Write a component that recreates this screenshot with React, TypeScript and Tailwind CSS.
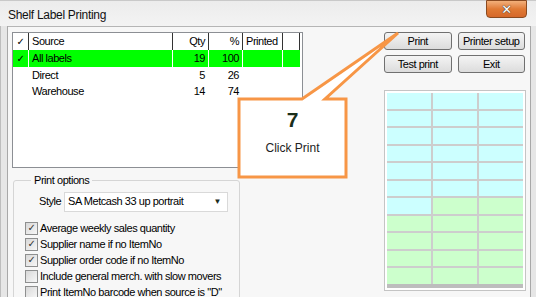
import React from "react";

const rows = [
  { name: "All labels", qty: 19, pct: 100, sel: true },
  { name: "Direct", qty: 5, pct: 26, sel: false },
  { name: "Warehouse", qty: 14, pct: 74, sel: false },
];

const options = [
  { text: "Average weekly sales quantity", on: true },
  { text: "Supplier name if no ItemNo", on: true },
  { text: "Supplier order code if no ItemNo", on: true },
  { text: "Include general merch. with slow movers", on: false },
  { text: 'Print ItemNo barcode when source is "D"', on: false },
];

function CheckBox({ on }: { on: boolean }) {
  return (
    <div className="w-[13px] h-[13px] border border-[#8e8f8f] bg-gradient-to-br from-[#d8d8d8] to-[#f7f7f7] flex items-center justify-center text-[10px] leading-none text-[#333]">
      {on ? "✓" : ""}
    </div>
  );
}

function Btn({ label }: { label: string }) {
  return (
    <div className="h-[18px] rounded-[3px] border border-[#707070] bg-gradient-to-b from-[#f4f4f4] to-[#dcdcdc] flex items-center justify-center text-[11px] text-black">
      {label}
    </div>
  );
}

export default function App() {
  const cells = Array.from({ length: 33 }, (_, i) => i);
  return (
    <div
      className="relative w-[536px] h-[297px] overflow-hidden bg-[#efefef] text-[11px] tracking-[-0.45px] text-black"
      style={{ fontFamily: '"Liberation Sans", "DejaVu Sans", sans-serif' }}
    >
      {/* title bar */}
      <div className="h-[26px] flex border-t border-[#c9c9c9] bg-gradient-to-b from-[#ececec] to-[#f3f3f3]">
        <div className="pl-[8px] pt-[5px] text-[12px] tracking-[-0.3px] text-[#111]">Shelf Label Printing</div>
        <div className="ml-auto mr-[9px] -mt-[1px] w-[41px] h-[18px] rounded-b-[4px] border border-[#8a4a20] bg-gradient-to-b from-[#f2b07a] via-[#e07a34] to-[#d5682a] flex items-center justify-center">
          <span className="text-white font-bold text-[13px] leading-none" style={{ textShadow: "0 0 1px #333, 0 0 1px #333" }}>
            ✕
          </span>
        </div>
      </div>

      {/* body */}
      <div className="flex h-[271px]">
        <div className="w-[8px] border-l border-[#bdbdbd] border-r border-r-[#a8a8a8] bg-[#e6e6e6]" />
        <div className="w-[522px] bg-[#f7f7f7] border-t border-[#b5b5b5] flex pl-[4px] pt-[5px]">
          {/* left column */}
          <div className="w-[291px] flex flex-col">
            <div className="shrink-0 h-[136px] border border-[#8c8f94] bg-white">
              <div className="flex h-[17px] items-center">
                <div className="w-[16px] h-full flex items-center justify-center border-r border-[#333] text-[10px]">✓</div>
                <div className="w-[144px] h-full flex items-center pl-[3px] border-r border-[#333]">Source</div>
                <div className="w-[36px] h-full flex items-center justify-end pr-[3px] border-r border-[#333]">Qty</div>
                <div className="w-[34px] h-full flex items-center justify-end pr-[3px] border-r border-[#333]">%</div>
                <div className="w-[40px] h-full flex items-center pl-[3px] border-r border-[#333]">Printed</div>
                <div className="w-[17px] h-full border-r border-[#333]" />
              </div>
              {rows.map((r) => (
                <div key={r.name} className="flex h-[16.5px] items-center">
                  <div className={`w-[16px] h-full flex items-center justify-center border-r border-white text-[10px] ${r.sel ? "bg-[#00ff00]" : ""}`}>
                    {r.sel ? "✓" : ""}
                  </div>
                  <div className={`w-[144px] h-full flex items-center pl-[3px] border-r border-white ${r.sel ? "bg-[#00ff00]" : ""}`}>{r.name}</div>
                  <div className={`w-[36px] h-full flex items-center justify-end pr-[3px] border-r border-white ${r.sel ? "bg-[#00ff00]" : ""}`}>{r.qty}</div>
                  <div className={`w-[34px] h-full flex items-center justify-end pr-[3px] border-r border-white ${r.sel ? "bg-[#00ff00]" : ""}`}>{r.pct}</div>
                  <div className={`w-[40px] h-full border-r border-white ${r.sel ? "bg-[#00ff00]" : ""}`} />
                  <div className={`w-[17px] h-full ${r.sel ? "bg-[#00ff00]" : ""}`} />
                </div>
              ))}
            </div>

            <fieldset className="shrink-0 mt-[4px] ml-[1px] w-[225px] h-[140px] border border-[#d5d5d5] rounded-[3px] px-[11px]">
              <legend className="ml-[6px] px-[3px] text-[11px]">Print options</legend>
              <div className="flex items-center mt-[3px] pl-[14px]">
                <span className="w-[25px]">Style</span>
                <div className="w-[164px] h-[20px] border border-[#d9d9d9] bg-white flex items-center pl-[3px] pr-[6px]">
                  <span className="flex-1">SA Metcash 33 up portrait</span>
                  <span className="text-[8px] text-[#1d2d1d]">▼</span>
                </div>
              </div>
              <div className="mt-[10px] flex flex-col gap-[3px]">
                {options.map((o) => (
                  <div key={o.text} className="flex items-center h-[13px] gap-[2px]">
                    <CheckBox on={o.on} />
                    <span>{o.text}</span>
                  </div>
                ))}
              </div>
            </fieldset>
          </div>

          {/* right column */}
          <div className="ml-[81px] w-[142px] flex flex-col">
            <div className="grid grid-cols-2 gap-x-[6px] gap-y-[5px] w-[141px]">
              <Btn label="Print" />
              <Btn label="Printer setup" />
              <Btn label="Test print" />
              <Btn label="Exit" />
            </div>
            <div className="shrink-0 mt-[17px] w-[142px] h-[201px] border border-[#c4c4c4] bg-white p-[2px] flex flex-col">
              <div className="grid grid-cols-3 grid-rows-[repeat(11,minmax(0,1fr))] gap-[2px] bg-[#cdcdcd] h-[192px]">
                {cells.map((i) => (
                  <div key={i} className={i < 19 ? "bg-[#ccffff]" : "bg-[#ccffcc]"} />
                ))}
              </div>
              <div className="h-[4px] bg-[#bdbdbd]" />
            </div>
          </div>
        </div>
        <div className="w-[6px] border-l border-[#a8a8a8] bg-[#e6e6e6]" />
      </div>

      {/* callout */}
      <svg className="absolute left-0 top-0 pointer-events-none" width="536" height="297">
        <polygon
          points="239,99 302,99 398,33 325,99 346,99 346,177 239,177"
          fill="white"
          stroke="#f79646"
          strokeWidth="3"
          strokeLinejoin="miter"
        />
      </svg>
      <div className="absolute left-[239px] top-[99px] w-[107px] h-[78px] flex flex-col items-center pt-[10px] tracking-normal">
        <span className="text-[21px] font-bold leading-none text-[#1a2e1a]">7</span>
        <span className="mt-[9px] text-[12px] text-[#222]">Click Print</span>
      </div>
    </div>
  );
}
